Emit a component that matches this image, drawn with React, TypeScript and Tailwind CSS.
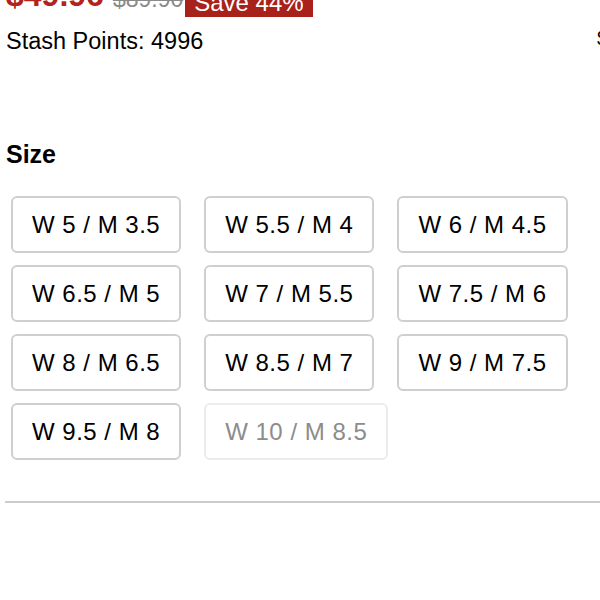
const sizes = [
  { label: 'W 5 / M 3.5', available: true },
  { label: 'W 5.5 / M 4', available: true },
  { label: 'W 6 / M 4.5', available: true },
  { label: 'W 6.5 / M 5', available: true },
  { label: 'W 7 / M 5.5', available: true },
  { label: 'W 7.5 / M 6', available: true },
  { label: 'W 8 / M 6.5', available: true },
  { label: 'W 8.5 / M 7', available: true },
  { label: 'W 9 / M 7.5', available: true },
  { label: 'W 9.5 / M 8', available: true },
  { label: 'W 10 / M 8.5', available: false },
];

export default function App() {
  return (
    <div className="w-[600px] h-[600px] overflow-hidden bg-white text-black font-['Liberation_Sans',Arial,sans-serif]">
      <div className="px-[6px]">
        {/* price row, scrolled partly out of view */}
        <div className="flex items-end -mt-[15px] h-[32px]">
          <span className="text-[32px] font-bold leading-none text-[#b3231b] mb-[6px]">$49.96</span>
          <span className="ml-[9px] text-[23px] leading-none text-[#8a8a8a] line-through mb-[6px]">$89.90</span>
          <span className="ml-[2px] bg-[#a8211a] text-white text-[24px] leading-none px-[9px] pt-[6px] pb-[2px]">Save 44%</span>
        </div>

        <div className="flex items-center mt-[10px]">
          <span className="text-[23.5px] leading-[28px]">Stash Points: 4996</span>
          <span className="ml-auto -mr-[14px] text-[20px] leading-none -mt-[6px]">$</span>
        </div>

        <h2 className="mt-[85px] text-[25px] font-bold leading-[28px]">Size</h2>

        <div className="mt-[28px] pl-[5px] flex flex-wrap gap-x-[23px] gap-y-[12px]">
          {sizes.map((s) => (
            <button
              key={s.label}
              disabled={!s.available}
              className={
                s.available
                  ? 'h-[57px] px-[19px] rounded-[6px] border-2 border-[#cfcfcf] bg-white text-[24px] tracking-[0.5px] text-black leading-none whitespace-nowrap'
                  : 'h-[57px] px-[19px] rounded-[6px] border-2 border-[#ececec] bg-white text-[24px] tracking-[0.5px] text-[#8c8c8c] leading-none whitespace-nowrap'
              }
            >
              {s.label}
            </button>
          ))}
        </div>
      </div>

      <div className="mt-[41px] ml-[5px] h-[2px] bg-[#cccccc]" />
    </div>
  );
}
